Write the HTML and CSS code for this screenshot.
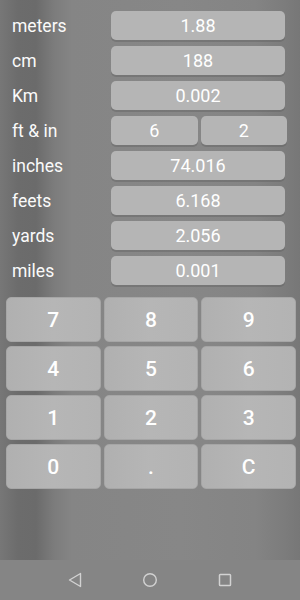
FILE: index.html
```html
<!DOCTYPE html>
<html lang="en">
<head>
    <meta charset="UTF-8">
    <meta name="viewport" content="width=device-width, initial-scale=1.0">
    <title>Length Converter</title>
    <link rel="stylesheet" href="styles.css">
</head>
<body>
    <div class="screen">
        <div class="converter">
            <div class="row">
                <span class="unit">meters</span>
                <div class="field">1.88</div>
            </div>
            <div class="row">
                <span class="unit">cm</span>
                <div class="field">188</div>
            </div>
            <div class="row">
                <span class="unit">Km</span>
                <div class="field">0.002</div>
            </div>
            <div class="row">
                <span class="unit">ft &amp; in</span>
                <div class="split">
                    <div class="field">6</div>
                    <div class="field">2</div>
                </div>
            </div>
            <div class="row">
                <span class="unit">inches</span>
                <div class="field">74.016</div>
            </div>
            <div class="row">
                <span class="unit">feets</span>
                <div class="field">6.168</div>
            </div>
            <div class="row">
                <span class="unit">yards</span>
                <div class="field">2.056</div>
            </div>
            <div class="row">
                <span class="unit">miles</span>
                <div class="field">0.001</div>
            </div>
        </div>

        <div class="keypad">
            <button class="key">7</button>
            <button class="key">8</button>
            <button class="key">9</button>
            <button class="key">4</button>
            <button class="key">5</button>
            <button class="key">6</button>
            <button class="key">1</button>
            <button class="key">2</button>
            <button class="key">3</button>
            <button class="key">0</button>
            <button class="key">.</button>
            <button class="key">C</button>
        </div>
    </div>

    <div class="navbar">
        <svg width="16" height="16" viewBox="0 0 16 16">
            <path d="M13.5 1.5 L2.5 8 L13.5 14.5 Z" fill="none" stroke="#d2d2d2" stroke-width="1.4" stroke-linejoin="round"/>
        </svg>
        <svg width="16" height="16" viewBox="0 0 16 16">
            <circle cx="8" cy="8" r="6.3" fill="none" stroke="#d2d2d2" stroke-width="1.4"/>
        </svg>
        <svg width="16" height="16" viewBox="0 0 16 16">
            <rect x="2.5" y="2.5" width="11" height="11" rx="0.8" fill="none" stroke="#d2d2d2" stroke-width="1.5"/>
        </svg>
    </div>
</body>
</html>
```

FILE: styles.css
```css
* {
    margin: 0;
    padding: 0;
    box-sizing: border-box;
}

body {
    width: 300px;
    height: 600px;
    overflow: hidden;
    font-family: Roboto, 'Liberation Sans', sans-serif;
    color: #fff;
    background: #858585;
}

.screen {
    height: 560px;
    background: linear-gradient(to right,
        #777 0%, #6c6c6c 6%, #6b6b6b 12%, #7c7c7c 18%,
        #858585 24%, #878787 60%, #848484 85%, #7b7b7b 96%, #777 100%);
}

/* 换算区 */
.converter {
    padding: 11px 15px 0 12px;
    display: flex;
    flex-direction: column;
    gap: 6px;
}

.row {
    display: flex;
    align-items: center;
    height: 29px;
}

.unit {
    width: 99px;
    font-size: 17.5px;
    color: #fafafa;
}

.field {
    flex: 1;
    height: 29px;
    line-height: 29px;
    text-align: center;
    font-size: 18px;
    background: #b5b5b5;
    border-radius: 5px;
    box-shadow: 0 2px 0 rgba(90, 90, 90, 0.35);
}

.split {
    flex: 1;
    display: flex;
    gap: 3px;
    margin-right: -2px;
}

/* 键盘 */
.keypad {
    margin-top: 12px;
    padding: 0 4px 0 6px;
    display: grid;
    grid-template-columns: repeat(3, 1fr);
    grid-auto-rows: 45px;
    gap: 4px 3px;
}

.key {
    border: 1px solid #a6a6a6;
    border-radius: 5px;
    background: linear-gradient(to right, #b0b0b0, #b6b6b6 50%, #b3b3b3);
    color: #fff;
    font-family: Roboto, 'Liberation Sans', sans-serif;
    font-size: 21px;
    font-weight: 500;
}

.navbar {
    height: 40px;
    background: #858585;
    display: flex;
    justify-content: center;
    align-items: center;
    gap: 59px;
}
```
